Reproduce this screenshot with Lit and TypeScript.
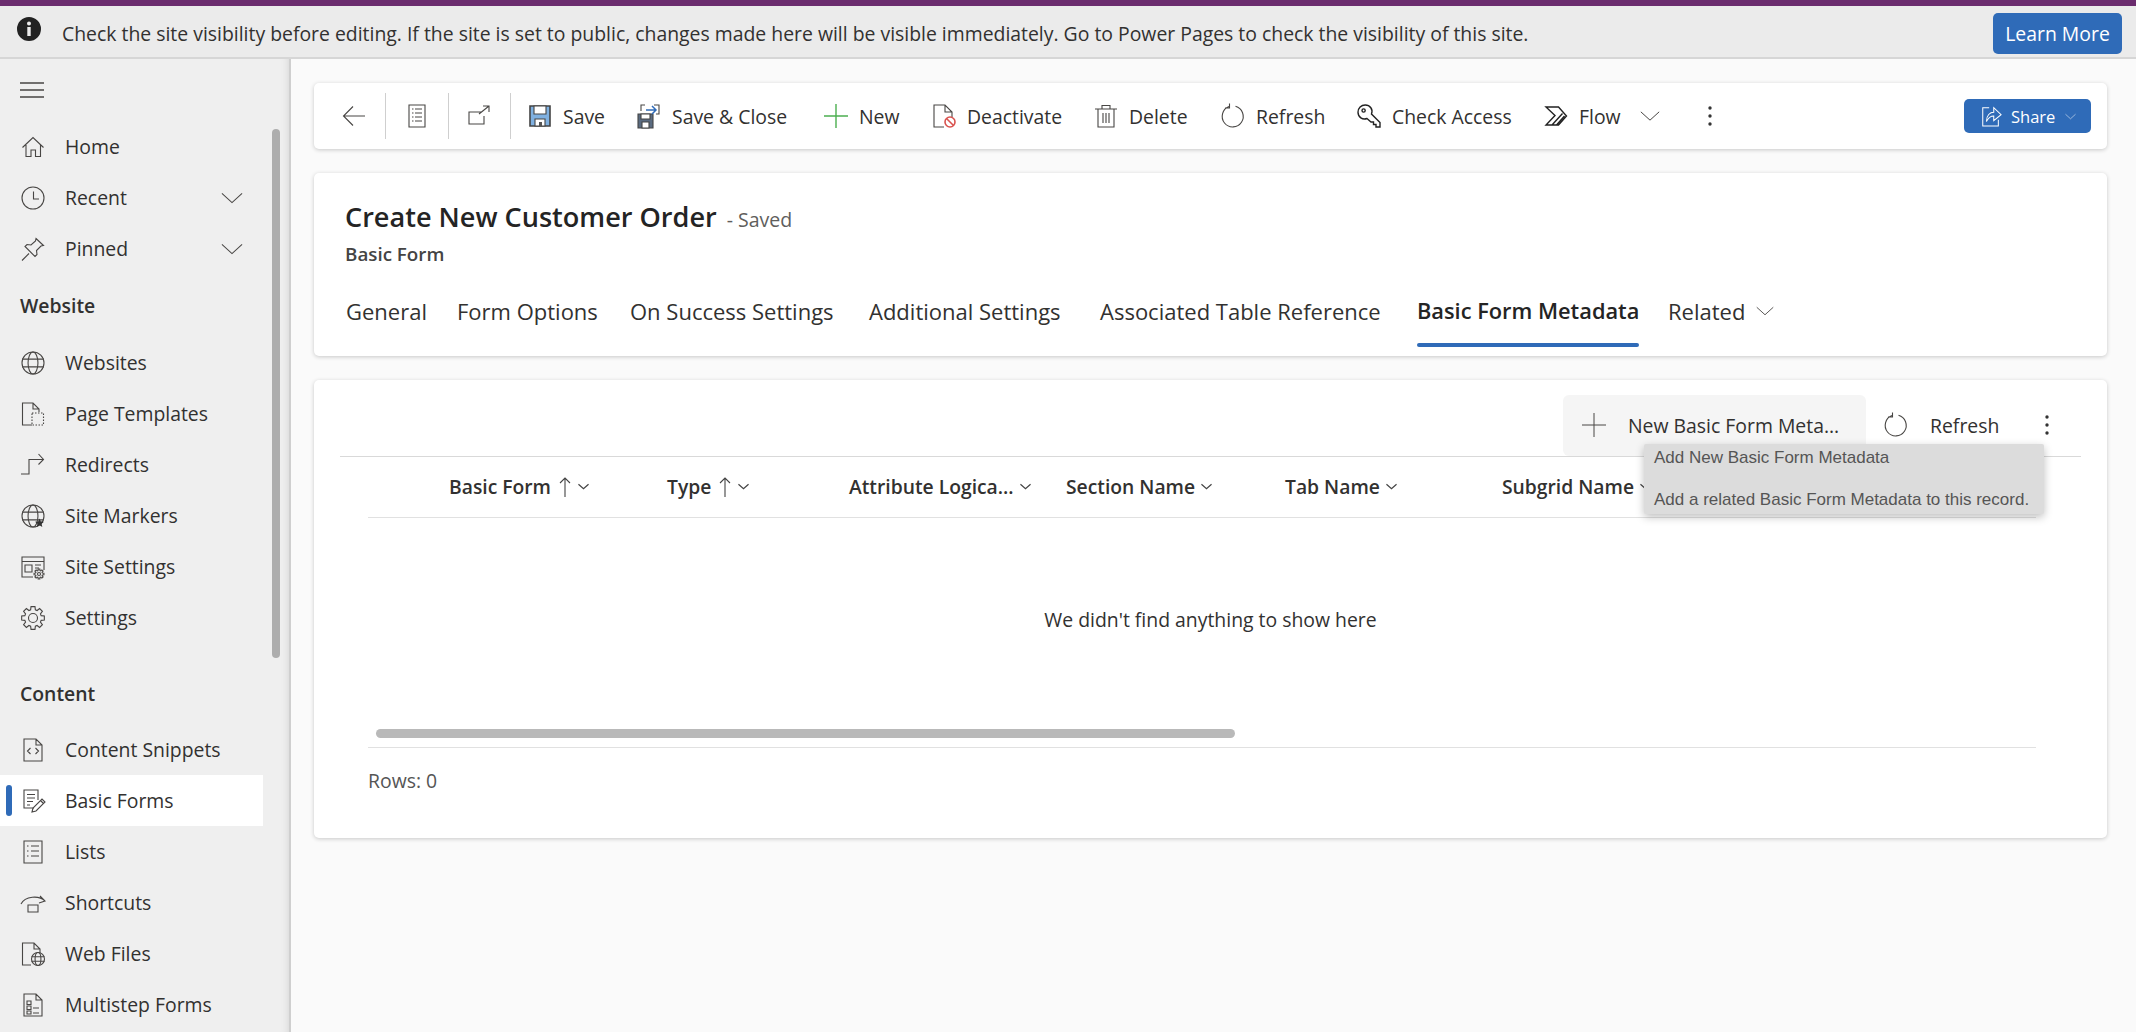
import { LitElement, css, html, svg } from "lit";
import { customElement } from "lit/decorators.js";

// cog outline shared by the gear icons
function gear(cx: number, cy: number, outer: number, inner: number, teeth = 8) {
  const pts: string[] = [];
  const step = (Math.PI * 2) / teeth;
  for (let i = 0; i < teeth; i++) {
    const a = i * step;
    [[-0.22, outer], [0.22, outer], [0.36, inner], [0.64, inner]].forEach(([off, r]) => {
      const t = a + step * off;
      pts.push(`${(cx + Math.cos(t) * r).toFixed(2)} ${(cy + Math.sin(t) * r).toFixed(2)}`);
    });
  }
  return `M${pts.join("L")}Z`;
}

const globe = (cx: number, cy: number, r: number) => svg`
  <circle cx=${cx} cy=${cy} r=${r} />
  <ellipse cx=${cx} cy=${cy} rx=${r * 0.45} ry=${r} />
  <path d="M${cx - r} ${cy - r * 0.35}h${r * 2}M${cx - r} ${cy + r * 0.35}h${r * 2}" />`;

const icons: Record<string, unknown> = {
  menu: svg`<path d="M0 5h24M0 12h24M0 19h24" />`,
  home: svg`<path d="M1.5 12.5 12 2.5l10.5 10M5 10v11.5h5V15h4.5v6.5H19.5V10" />`,
  clock: svg`<circle cx="12" cy="12" r="11" /><path d="M12.500 5.500v7.500H18" />`,
  pin: svg`<path d="M1 23.500 8 16.500M15 1.500l7.500 7-2.500.500-4.500 4.500.5 4-2 2-10-10 2-2 4 .5L14.500 4z" />`,
  globe: globe(12, 12, 11),
  template: svg`<path d="M11 23H1.500V1H12l6 6v3M12 1v6h6" /><path stroke-dasharray="1.500 1.500" d="M11 11h11.500v12H11z" />`,
  redirect: svg`<path d="M0 21h8V6.500h14M17.500 1l5 5.500-5 5" />`,
  marker: svg`${globe(12, 12, 11)}<path class="solid" d="m18.500 14.500 1.300 2.900 3.200.3-2.400 2.100.7 3.100-2.800-1.600-2.800 1.600.7-3.100-2.400-2.100 3.200-.3z" />`,
  siteset: svg`<path d="M12 22H1V2h22v13M1 6.500h22M4 10h7v7H4zM14 10h6M14 13h4" /><path d="${gear(18, 19, 5, 3.5)}" /><circle cx="18" cy="19" r="1.500" />`,
  gear: svg`<path d="${gear(12, 12, 11.5, 8.5)}" /><circle cx="12" cy="12" r="4.500" />`,
  snippet: svg`<path d="M3 23V1h12l6 6v16zM15 1v6h6M9.500 10 6.500 13l3 3M14.500 10l3 3-3 3" />`,
  form: svg`<path d="M13 19H3V1h14v10M6 5.500h8M6 9h8M6 12.500h6M6 16h3" /><path d="m11 23 1-4 9-9 3 3-9 9zM19.500 11.500l3 3" />`,
  list: svg`<path d="M3 1h18v22H3zM6 6h1.500M10 6h8M6 11h1.500M10 11h8M6 16h1.500M10 16h8" />`,
  shortcut: svg`<path d="M0 13C4 5 18 4 24 10M19 5l5 5-6 2M7 14h10v7H7z" />`,
  webfile: svg`<path d="M10 23H1.500V1H13l6 6v4M13 1v6h6" />${globe(17, 17, 6.5)}`,
  multi: svg`<path d="M3 23V1h12l6 6v16zM15 1v6h6M6 8h4v3.500H6zM6 13h4v3.500H6zM6 18h4v3H6zM12 15h6M12 20h6" />`,
  chevron: svg`<path d="M1 7l11 10L23 7" />`,
  back: svg`<path d="M23 12H2M11 2.500 1.500 12l9.500 9.500" />`,
  doc: svg`<path d="M4 1h16v22H4zM7 5h1.500M10 5h7M7 9h1.500M10 9h7M7 13h1.500M10 13h7M7 17h1.500M10 17h7" />`,
  open: svg`<path d="M15 8H2v12h15v-8M12 10 22 2M16 2h6v6" />`,
  save: svg`<path class="blue" d="M2 2h20v20H2z" /><path class="white" d="M6 2h12v8H6z" /><path class="white" d="M7 15h10v7H7z" /><path class="dark" d="M11 18h3v4h-3z" />`,
  saveclose: svg`<path class="dark-fill" d="M1 10h15v14H1z" /><path class="white" d="M4 10h9v5H4z" /><path class="white" d="M5 18h7v6H5z" /><path d="M4 7V1h4M17 1h5v9h-3" /><path class="arrow" d="M9 6h10M15 2l4 4-4 4" />`,
  plus: svg`<path d="M12 0v24M0 12h24" />`,
  deact: svg`<path d="M12 23H2V1h11l7 7v5M13 1v7h7" /><circle class="no" cx="18" cy="18" r="5" /><path class="no" d="m14.500 14.500 7 7" />`,
  trash: svg`<path d="M4 5v18h16V5M1 5h22M8 5V1.500h8V5M9 9v10M12 9v10M15 9v10" />`,
  refresh: svg`<path d="M8 2.600a10.500 10.500 0 1 0 6.500-.3M8.500-.5v4.500H4" />`,
  key: svg`<path class="bold" d="M10 14.500c-4.500 1.800-9-1.500-9-6.200A7.200 7.200 0 0 1 8.300 1c4.700 0 8 4.400 6.200 9l8.500 8.500V23h-4v-2.500h-2.500V18H14zM5 6.500a1.600 1.600 0 1 0 3.200 0 1.600 1.600 0 1 0-3.200 0z" />`,
  flow: svg`<path class="bold" d="M2 3h12.500l8 9-8 9H2l9-9.500zM8 21 18.500 9.500M12.500 21l8-9" />`,
  dots: svg`<circle class="solid" cx="12" cy="4" r="1.700" /><circle class="solid" cx="12" cy="12" r="1.700" /><circle class="solid" cx="12" cy="20" r="1.700" />`,
  share: svg`<path d="M10 3H3v20h17v-7" /><path d="M7 18c0-7 4-10 8-10V3l8 7.500L15 17v-5c-4 0-6 2-8 6z" />`,
};

const icon = (name: string, cls = "") =>
  html`<svg class="ico ${cls}" viewBox="0 0 24 24">${icons[name]}</svg>`;

const NAV_TOP = [
  { label: "Home", ic: "home" },
  { label: "Recent", ic: "clock", more: true },
  { label: "Pinned", ic: "pin", more: true },
];
const NAV_SITE = [
  { label: "Websites", ic: "globe" },
  { label: "Page Templates", ic: "template" },
  { label: "Redirects", ic: "redirect" },
  { label: "Site Markers", ic: "marker" },
  { label: "Site Settings", ic: "siteset" },
  { label: "Settings", ic: "gear" },
];
const NAV_CONTENT = [
  { label: "Content Snippets", ic: "snippet" },
  { label: "Basic Forms", ic: "form", active: true },
  { label: "Lists", ic: "list" },
  { label: "Shortcuts", ic: "shortcut" },
  { label: "Web Files", ic: "webfile" },
  { label: "Multistep Forms", ic: "multi" },
];

const TOOLS = [
  { label: "Save", ic: "save" },
  { label: "Save & Close", ic: "saveclose" },
  { label: "New", ic: "plus", cls: "green" },
  { label: "Deactivate", ic: "deact" },
  { label: "Delete", ic: "trash" },
  { label: "Refresh", ic: "refresh" },
  { label: "Check Access", ic: "key" },
  { label: "Flow", ic: "flow" },
];

const TABS = [
  "General",
  "Form Options",
  "On Success Settings",
  "Additional Settings",
  "Associated Table Reference",
  "Basic Form Metadata",
];

const COLUMNS = [
  { label: "Basic Form", sorted: true },
  { label: "Type", sorted: true },
  { label: "Attribute Logica..." },
  { label: "Section Name" },
  { label: "Tab Name" },
  { label: "Subgrid Name" },
];

@customElement("app-root")
export class AppRoot extends LitElement {
  static styles = css`
    :host {
      display: flex;
      flex-direction: column;
      height: 1032px;
      overflow: hidden;
      font-family: "Open Sans", "Noto Sans", sans-serif;
      font-size: 19.4px;
      color: #323130;
      background: #fafafa;
    }
    .ico {
      width: 24px;
      height: 24px;
      flex: none;
      fill: none;
      stroke: #484644;
      stroke-width: 1.1;
      overflow: visible;
    }
    .ico .solid { fill: #333; stroke: none; }
    .ico .blue { fill: #7fb0e0; stroke: #444; stroke-width: 1.6; }
    .ico .white { fill: #fff; stroke: #444; }
    .ico .dark { fill: #555; stroke: none; }
    .ico .dark-fill { fill: #5a6b80; stroke: #444; }
    .ico .arrow { stroke: #2f6bb8; stroke-width: 1.5; }
    .ico .no { stroke: #d9534f; stroke-width: 1.6; fill: #fff; }
    .ico .bold { stroke: #222; stroke-width: 1.4; }
    .ico.green { stroke: #4caf50; stroke-width: 1.4; }
    .ico.light { stroke: #484644; stroke-width: 1; }

    .accent { height: 6px; background: #6b2c6e; flex: none; }
    .banner {
      flex: none;
      height: 53px;
      box-sizing: border-box;
      display: flex;
      align-items: center;
      background: #ebebeb;
      border-bottom: 2px solid #d6d6d6;
      padding-left: 17px;
      padding-right: 14px;
    }
    .info {
      width: 24px;
      height: 24px;
      flex: none;
      margin-bottom: 6px;
      fill: #222;
    }
    .banner-text { margin-left: 21px; flex: 1; white-space: nowrap; padding-top: 4px; }
    .learn {
      width: 129px;
      height: 41px;
      margin-bottom: -3px;
      display: flex;
      align-items: center;
      justify-content: center;
      border-radius: 5px;
      background: #2f6bb8;
      color: #fff;
    }

    .body { flex: 1; display: flex; min-height: 0; }
    .side {
      position: relative;
      flex: none;
      width: 291px;
      box-sizing: border-box;
      overflow: hidden;
      background: #efefef;
      border-right: 2px solid #cfcfcf;
      box-shadow: inset -8px 0 8px -8px rgba(0, 0, 0, 0.12);
    }
    .burger { height: 62px; display: flex; align-items: center; padding-left: 20px; }
    .burger .ico { stroke-width: 1.3; }
    .row {
      height: 51px;
      position: relative;
      width: 263px;
      display: flex;
      align-items: center;
      padding-left: 21px;
      box-sizing: border-box;
      gap: 20px;
    }
    .row.active { background: #fff; }
    .row.active::before {
      content: "";
      position: absolute;
      left: 6px;
      top: 10px;
      bottom: 10px;
      width: 6px;
      border-radius: 3px;
      background: #2f6bb8;
    }
    .row .chev { margin-left: auto; margin-right: 20px; width: 22px; height: 22px; }
    .head {
      height: 63px;
      display: flex;
      align-items: center;
      padding-left: 20px;
      font-weight: 600;
    }
    .head.content { height: 81px; padding-top: 20px; box-sizing: border-box; }
    .thumb {
      position: absolute;
      left: 272px;
      top: 70px;
      width: 8px;
      height: 529px;
      border-radius: 4px;
      background: #adadad;
    }

    .main {
      flex: 1;
      min-width: 0;
      padding: 24px 29px 0 23px;
      display: flex;
      flex-direction: column;
    }
    .card {
      position: relative;
      background: #fff;
      border-radius: 5px;
      box-shadow: 0 1px 4px rgba(0, 0, 0, 0.2);
    }
    .cmd {
      height: 66px;
      display: grid;
      grid-template-columns: 43px 20px 43px 19px 43px 18px 109px 187px 108px 162px 127px 136px 187px 105px 49px 24px 1fr;
      align-items: center;
      padding-left: 28px;
      padding-right: 16px;
    }
    .sep { width: 1px; height: 46px; background: #cfcfcf; }
    .tool { display: flex; align-items: center; gap: 11px; white-space: nowrap; }
    .cmd .chev { width: 20px; height: 20px; stroke-width: 1.2; margin-left: -9px; }
    .share {
      justify-self: end;
      width: 127px;
      height: 34px;
      box-sizing: border-box;
      display: flex;
      align-items: center;
      padding-left: 16px;
      gap: 9px;
      border-radius: 5px;
      background: #2f6bb8;
      color: #fff;
      font-size: 16.5px;
    }
    .share .ico { width: 22px; height: 22px; stroke: #fff; }
    .share .mini { width: 11px; height: 11px; stroke: #fff; margin-left: 1px; }

    .record { margin-top: 24px; padding: 25px 0 30px 31px; }
    .title { display: flex; align-items: baseline; line-height: 38px; white-space: nowrap; }
    .title b { font-size: 27.1px; font-weight: 600; color: #242424; }
    .title span { font-size: 19.5px; color: #605e5c; margin-left: 10px; }
    .sub { margin-top: 2px; line-height: 26px; font-size: 18.8px; font-weight: 600; color: #444; }
    .tabs {
      margin-top: 29px;
      margin-left: 1px;
      display: grid;
      grid-template-columns: 111px 173px 239px 231px 317px 251px auto;
      justify-content: start;
      justify-items: start;
      line-height: 30px;
      font-size: 22px;
      white-space: nowrap;
    }
    .tab { position: relative; display: flex; align-items: center; }
    .tab.active { font-weight: 600; font-size: 21.8px; color: #242424; }
    .tab.active::after {
      content: "";
      position: absolute;
      left: 0;
      right: 0;
      bottom: -21px;
      height: 4px;
      border-radius: 2px;
      background: #2f6bb8;
    }
    .tab .chev { width: 18px; height: 18px; margin-left: 11px; stroke-width: 1.2; }

    .grid-card { margin-top: 23.5px; padding-top: 15px; }
    .grid-bar {
      height: 61px;
      margin: 0 26px;
      display: flex;
      align-items: center;
      border-bottom: 1px solid #d9d9d9;
      padding-left: 1223px;
    }
    .new-btn {
      width: 303px;
      height: 61px;
      flex: none;
      box-sizing: border-box;
      display: flex;
      align-items: center;
      padding-left: 19px;
      gap: 22px;
      border-radius: 6px;
      background: #f5f5f5;
      white-space: nowrap;
    }
    .grid-refresh {
      margin-left: 18px;
      width: 112px;
      flex: none;
      display: flex;
      align-items: center;
      gap: 22px;
    }
    .grid-dots { margin-left: 39px; }
    .cols {
      margin: 0 71px 0 54px;
      height: 60px;
      padding-left: 81px;
      display: grid;
      grid-template-columns: 218px 182px 217px 219px 217px auto;
      justify-content: start;
      align-items: center;
      border-bottom: 1px solid #e1e1e1;
      font-weight: 600;
      font-size: 19.3px;
      white-space: nowrap;
    }
    .col { display: flex; align-items: center; }
    .col .up { width: 16px; height: 20px; margin-left: 6px; margin-right: -1px; stroke: #444; }
    .col .down { width: 11px; height: 11px; margin-left: 6px; stroke-width: 2.6; stroke: #444; }
    .empty {
      height: 203px;
      display: flex;
      align-items: center;
      justify-content: center;
    }
    .hbar {
      margin-left: 62px;
      margin-top: 8px;
      width: 859px;
      height: 9px;
      border-radius: 5px;
      background: #b9b9b9;
    }
    .foot {
      margin: 9px 71px 0 54px;
      height: 91px;
      box-sizing: border-box;
      padding-bottom: 24px;
      display: flex;
      align-items: center;
      border-top: 1px solid #e1e1e1;
      color: #555;
    }
    .tip {
      position: absolute;
      left: 1330px;
      top: 64px;
      width: 400px;
      height: 70px;
      box-sizing: border-box;
      padding: 2px 10px 3px;
      display: flex;
      flex-direction: column;
      justify-content: space-between;
      background: #dcdcdc;
      border-radius: 2px;
      box-shadow: 0 3px 8px rgba(0, 0, 0, 0.25);
      font-family: "Liberation Sans", Arial, sans-serif;
      font-size: 17px;
      line-height: 23px;
      color: #555;
      white-space: nowrap;
    }
  `;

  private navRow(item: { label: string; ic: string; more?: boolean; active?: boolean }) {
    return html`<div class="row ${item.active ? "active" : ""}">
      ${icon(item.ic)}<span>${item.label}</span>
      ${item.more ? icon("chevron", "chev") : ""}
    </div>`;
  }

  render() {
    return html`
      <div class="accent"></div>
      <div class="banner">
        <svg class="info" viewBox="0 0 24 24">
          <path fill-rule="evenodd" d="M12 0a12 12 0 1 1 0 24 12 12 0 0 1 0-24zM10.300 10h3.400v9h-3.400zM12 4.500a2 2 0 1 1 0 4 2 2 0 0 1 0-4z" />
        </svg>
        <div class="banner-text">
          Check the site visibility before editing. If the site is set to public, changes made here will be visible immediately. Go to Power Pages to check the visibility of this site.
        </div>
        <div class="learn">Learn More</div>
      </div>
      <div class="body">
        <aside class="side">
          <div class="burger">${icon("menu")}</div>
          ${NAV_TOP.map((i) => this.navRow(i))}
          <div class="head">Website</div>
          ${NAV_SITE.map((i) => this.navRow(i))}
          <div class="head content">Content</div>
          ${NAV_CONTENT.map((i) => this.navRow(i))}
          <div class="thumb"></div>
        </aside>
        <main class="main">
          <div class="card cmd">
            ${icon("back")}
            <div class="sep"></div>
            ${icon("doc")}
            <div class="sep"></div>
            ${icon("open")}
            <div class="sep"></div>
            ${TOOLS.map((t) => html`<div class="tool">${icon(t.ic, t.cls ?? "")}<span>${t.label}</span></div>`)}
            ${icon("chevron", "chev")}
            ${icon("dots")}
            <div class="share">${icon("share")}<span>Share</span>${icon("chevron", "mini")}</div>
          </div>

          <div class="card record">
            <div class="title"><b>Create New Customer Order</b><span>- Saved</span></div>
            <div class="sub">Basic Form</div>
            <div class="tabs">
              ${TABS.map((t) => html`<div class="tab ${t === "Basic Form Metadata" ? "active" : ""}">${t}</div>`)}
              <div class="tab">Related${icon("chevron", "chev")}</div>
            </div>
          </div>

          <div class="card grid-card">
            <div class="grid-bar">
              <div class="new-btn">${icon("plus", "light")}<span>New Basic Form Meta...</span></div>
              <div class="grid-refresh">${icon("refresh")}<span>Refresh</span></div>
              ${icon("dots", "grid-dots")}
            </div>
            <div class="cols">
              ${COLUMNS.map(
                (c) => html`<div class="col">
                  <span>${c.label}</span>
                  ${c.sorted
                    ? html`<svg class="ico up" viewBox="0 0 16 20"><path d="M8 20V1M3 6l5-5 5 5" /></svg>`
                    : ""}
                  ${icon("chevron", "down")}
                </div>`
              )}
            </div>
            <div class="empty">We didn't find anything to show here</div>
            <div class="hbar"></div>
            <div class="foot">Rows: 0</div>
            <div class="tip">
              <span>Add New Basic Form Metadata</span>
              <span>Add a related Basic Form Metadata to this record.</span>
            </div>
          </div>
        </main>
      </div>
    `;
  }
}
